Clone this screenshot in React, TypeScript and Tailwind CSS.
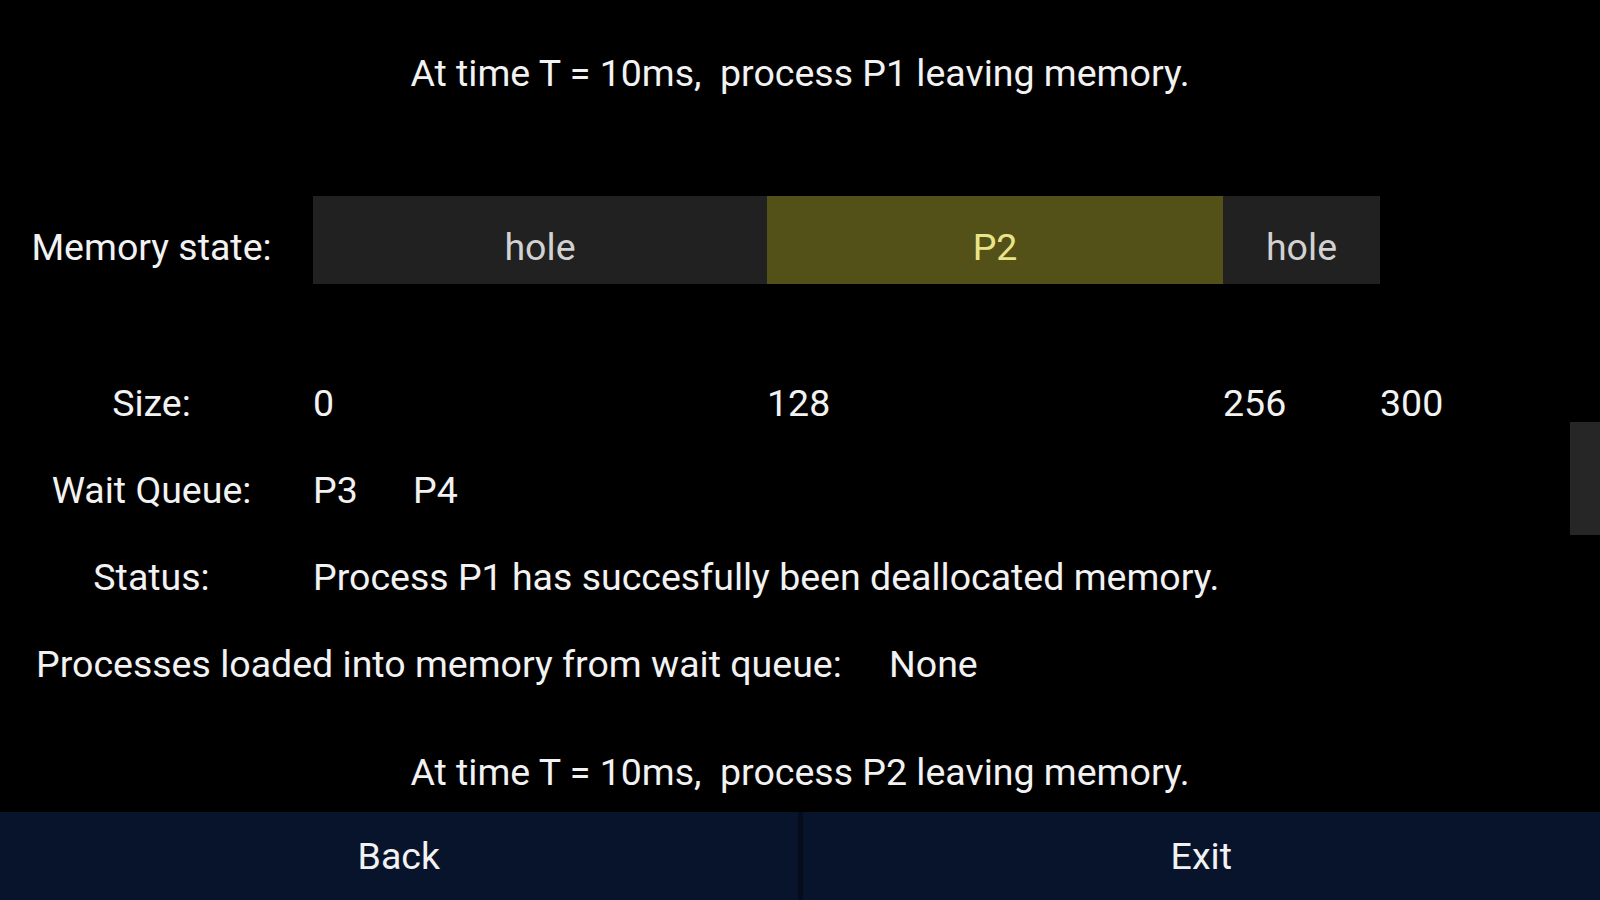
import React from 'react';

const segments = [
  { label: 'hole', width: 454, bg: 'bg-[#212121]', fg: 'text-[#d2d2d2]' },
  { label: 'P2', width: 456, bg: 'bg-[#545118]', fg: 'text-[#e9e48a]' },
  { label: 'hole', width: 157, bg: 'bg-[#212121]', fg: 'text-[#d2d2d2]' }
];

const sizes = [
  { value: '0', width: 454 },
  { value: '128', width: 456 },
  { value: '256', width: 157 },
  { value: '300', width: 100 }
];

function InfoRow({ label, children }: { label: string; children: React.ReactNode }) {
  return (
    <div className="flex h-[87px] items-center pt-[3px]">
      <div className="w-[303px] shrink-0 text-center">{label}</div>
      <div className="ml-[10px] flex items-center">{children}</div>
    </div>
  );
}

export default function App() {
  return (
    <div
      className="relative flex h-[900px] w-[1600px] flex-col overflow-hidden bg-black text-[37.5px] leading-[44px] text-[#f2f2f2]"
      style={{ fontFamily: 'Roboto, "Noto Sans", sans-serif' }}
    >
      <div className="flex h-[143px] items-center justify-center pt-[2px]">At time T = 10ms,&nbsp; process P1 leaving memory.</div>

      <div className="mt-[53px] flex h-[88px] items-center">
        <div className="w-[303px] shrink-0 pt-[14px] text-center">Memory state:</div>
        <div className="ml-[10px] flex h-full">
          {segments.map((seg, idx) => (
            <div
              key={idx}
              className={`flex h-full items-center justify-center pt-[13px] ${seg.bg} ${seg.fg}`}
              style={{ width: seg.width }}
            >
              {seg.label}
            </div>
          ))}
        </div>
      </div>

      <div className="mt-[74px]">
        <InfoRow label="Size:">
          {sizes.map((s) => (
            <div key={s.value} style={{ width: s.width }}>
              {s.value}
            </div>
          ))}
        </InfoRow>
        <InfoRow label="Wait Queue:">
          <div className="w-[100px]">P3</div>
          <div>P4</div>
        </InfoRow>
        <InfoRow label="Status:">
          <div>Process P1 has succesfully been deallocated memory.</div>
        </InfoRow>
        <div className="flex h-[87px] items-center pl-[36px] pt-[3px]">
          <div className="w-[853px]">Processes loaded into memory from wait queue:</div>
          <div>None</div>
        </div>
      </div>

      <div className="flex h-[106px] items-center justify-center pt-[26px]">
        At time T = 10ms,&nbsp; process P2 leaving memory.
      </div>

      <div className="flex h-[88px] bg-[#07142b]">
        <button type="button" className="flex flex-1 items-center justify-center text-[#f2f2f2]">
          Back
        </button>
        <div className="w-[5px] bg-[#050c1a]" />
        <button type="button" className="flex flex-1 items-center justify-center text-[#f2f2f2]">
          Exit
        </button>
      </div>

      <div className="absolute right-0 top-[422px] h-[113px] w-[30px] bg-[#262626]" />
    </div>
  );
}
